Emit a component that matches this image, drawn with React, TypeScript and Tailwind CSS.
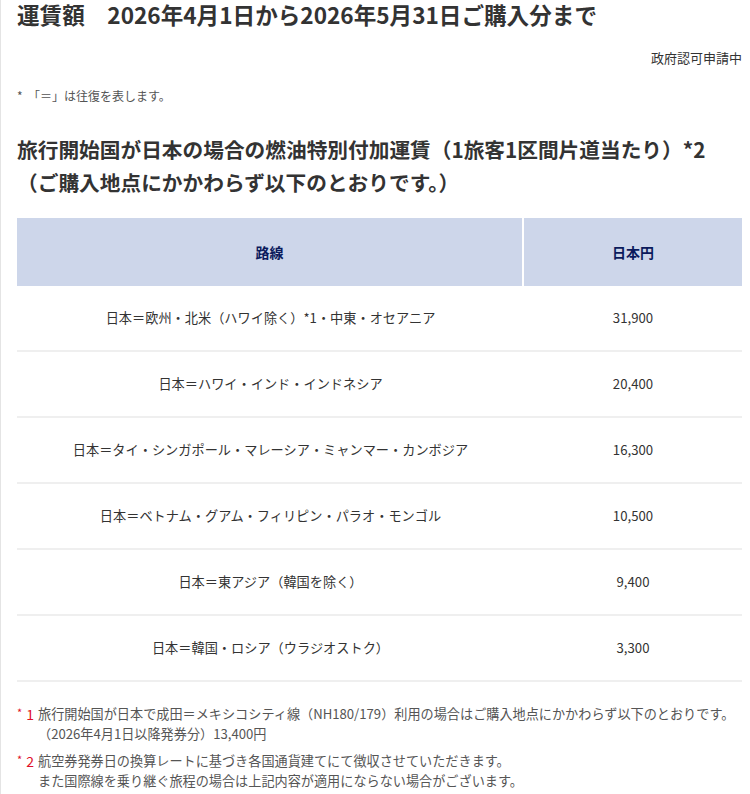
const rows = [
  { route: "日本＝欧州・北米（ハワイ除く）*1・中東・オセアニア", yen: "31,900" },
  { route: "日本＝ハワイ・インド・インドネシア", yen: "20,400" },
  { route: "日本＝タイ・シンガポール・マレーシア・ミャンマー・カンボジア", yen: "16,300" },
  { route: "日本＝ベトナム・グアム・フィリピン・パラオ・モンゴル", yen: "10,500" },
  { route: "日本＝東アジア（韓国を除く）", yen: "9,400" },
  { route: "日本＝韓国・ロシア（ウラジオストク）", yen: "3,300" },
];

const notes = [
  {
    mark: "1",
    lines: [
      "旅行開始国が日本で成田＝メキシコシティ線（NH180/179）利用の場合はご購入地点にかかわらず以下のとおりです。",
      "（2026年4月1日以降発券分）13,400円",
    ],
  },
  {
    mark: "2",
    lines: [
      "航空券発券日の換算レートに基づき各国通貨建てにて徴収させていただきます。",
      "また国際線を乗り継ぐ旅程の場合は上記内容が適用にならない場合がございます。",
    ],
  },
];

export default function App() {
  return (
    <div className="min-h-[794px] w-[750px] bg-white border-l border-[#e4e4e4] pl-4 pr-2 text-[#333] font-['Noto_Sans_CJK_JP','Noto_Sans',sans-serif]">
      {/* Title */}
      <h1 className="text-[22.6px] font-bold leading-[30px] text-[#333] whitespace-nowrap">
        運賃額　2026年4月1日から2026年5月31日ご購入分まで
      </h1>

      <p className="mt-[18px] text-right text-[13px] leading-[20px] text-[#333]">政府認可申請中</p>

      <p className="mt-[18px] text-[12px] leading-[20px] text-[#555]">*&nbsp;&nbsp;「＝」は往復を表します。</p>

      {/* Heading */}
      <h2 className="mt-[27px] text-[20.7px] font-bold leading-[33px] text-[#333] whitespace-nowrap">
        旅行開始国が日本の場合の燃油特別付加運賃（1旅客1区間片道当たり）*2
        <br />
        （ご購入地点にかかわらず以下のとおりです。）
      </h2>

      {/* Table */}
      <div className="mt-[19px] w-[725px]">
        <div className="flex h-[68px] bg-[#cdd6ea] text-[14px] font-bold text-[#0a1a5c]">
          <div className="flex w-[507px] items-center justify-center border-r-2 border-white">路線</div>
          <div className="flex flex-1 items-center justify-center">日本円</div>
        </div>
        {rows.map((r) => (
          <div key={r.yen} className="flex h-[66px] border-b-2 border-[#efefef] text-[13.2px] text-[#333]">
            <div className="flex w-[507px] items-center justify-center">{r.route}</div>
            <div className="flex flex-1 items-center justify-center">{r.yen}</div>
          </div>
        ))}
      </div>

      {/* Notes */}
      <div className="mt-[22px] flex flex-col gap-[7px] text-[13.15px] leading-[20px] text-[#555]">
        {notes.map((n) => (
          <div key={n.mark} className="flex">
            <span className="flex w-[21px] shrink-0 items-start gap-[4px] text-[#e0102a]">
              <span className="text-[11px] leading-[16px]">*</span>
              <span className="text-[14px]">{n.mark}</span>
            </span>
            <div>
              {n.lines.map((l) => (
                <p key={l} className="whitespace-nowrap">{l}</p>
              ))}
            </div>
          </div>
        ))}
      </div>
    </div>
  );
}
